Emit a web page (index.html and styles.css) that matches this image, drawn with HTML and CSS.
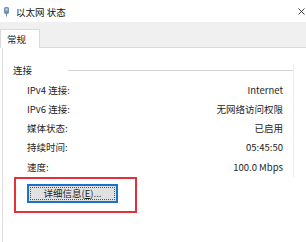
FILE: index.html
```html
<!DOCTYPE html>
<html lang="zh-CN">
<head>
    <meta charset="UTF-8">
    <meta name="viewport" content="width=device-width, initial-scale=1.0">
    <title>以太网 状态</title>
    <link rel="stylesheet" href="styles.css">
</head>
<body>
    <div class="window">
        <div class="titlebar">
            <svg class="app-icon" width="5" height="10" viewBox="0 0 5 10">
                <rect x="0.5" y="0.5" width="4" height="6" rx="0.8" fill="#6f8fb3" stroke="#4b6a8e" stroke-width="0.6"/>
                <rect x="1.4" y="1.4" width="2.2" height="2.2" fill="#c9dcef"/>
                <rect x="2" y="6.5" width="1" height="3" fill="#7a8796"/>
            </svg>
            <span class="title">以太网 状态</span>
            <svg class="close" width="7" height="7" viewBox="0 0 7 7">
                <path d="M0.5 0.5 L6.5 6.5 M6.5 0.5 L0.5 6.5" stroke="#2b2b2b" stroke-width="0.9"/>
            </svg>
        </div>

        <div class="tabstrip">
            <div class="tab">常规</div>
        </div>

        <div class="panel">
            <div class="group">
                <div class="group-head">
                    <span class="group-label">连接</span>
                    <span class="group-rule"></span>
                </div>
                <div class="rows">
                    <div class="row"><span>IPv4 连接:</span><span>Internet</span></div>
                    <div class="row"><span>IPv6 连接:</span><span>无网络访问权限</span></div>
                    <div class="row"><span>媒体状态:</span><span>已启用</span></div>
                    <div class="row"><span>持续时间:</span><span>05:45:50</span></div>
                    <div class="row"><span>速度:</span><span>100.0 Mbps</span></div>
                </div>
            </div>

            <div class="highlight">
                <button class="details-btn"><span class="focus">详细信息(<u>E</u>)...</span></button>
            </div>
        </div>
    </div>
</body>
</html>
```

FILE: styles.css
```css
* {
    margin: 0;
    padding: 0;
    box-sizing: border-box;
}

body {
    width: 306px;
    height: 242px;
    overflow: hidden;
    background-color: #ffffff;
    font-family: "Noto Sans CJK SC", "Noto Sans", sans-serif;
    font-size: 9.5px;
    color: #1e1e1e;
}

.window {
    width: 306px;
    height: 242px;
    display: flex;
    flex-direction: column;
}

.titlebar {
    height: 22px;
    display: flex;
    align-items: center;
    padding: 1px 1px 0 4px;
}

.app-icon {
    margin-right: 7px;
}

.title {
    color: #111;
    line-height: 12px;
}

.close {
    margin-left: auto;
}

.tabstrip {
    height: 26px;
    background-color: #f0f0f0;
    border-bottom: 1px solid #d9d9d9;
    display: flex;
    align-items: flex-end;
}

.tab {
    width: 40px;
    height: 19px;
    margin-bottom: -1px;
    background-color: #ffffff;
    border: 1px solid #d9d9d9;
    border-bottom: none;
    padding: 3px 0 0 6px;
    line-height: 12px;
}

.panel {
    flex: 1;
    margin-left: 2px;
    border-left: 1px solid #dedede;
}

.group {
    margin: 16px 0 0 6px;
    width: 285px;
    border-right: 1px solid #ececec;
}

.group-head {
    height: 12px;
    display: flex;
    align-items: center;
    padding-left: 4px;
}

.group-label {
    line-height: 12px;
}

.group-rule {
    flex: 1;
    height: 1px;
    margin-left: 36px;
    background-color: #d4d4d4;
}

.rows {
    margin-top: 4.5px;
    padding: 0 10px 0 18px;
}

.row {
    display: flex;
    justify-content: space-between;
    line-height: 19.3px;
    height: 19.3px;
}

.highlight {
    margin: 0 0 0 11px;
    width: 123px;
    height: 36px;
    border: 2px solid #e3303c;
    padding: 5px 0 0 11px;
}

.details-btn {
    width: 91px;
    height: 19px;
    background-color: #e1e1e1;
    border: 2px solid #1a73c9;
    font-family: inherit;
    font-size: 9.5px;
    color: #1e1e1e;
    padding: 1px;
    display: flex;
}

.focus {
    flex: 1;
    border: 1px dotted #555;
    line-height: 11px;
    text-align: center;
}

.focus u {
    text-decoration-thickness: 1px;
}
```
